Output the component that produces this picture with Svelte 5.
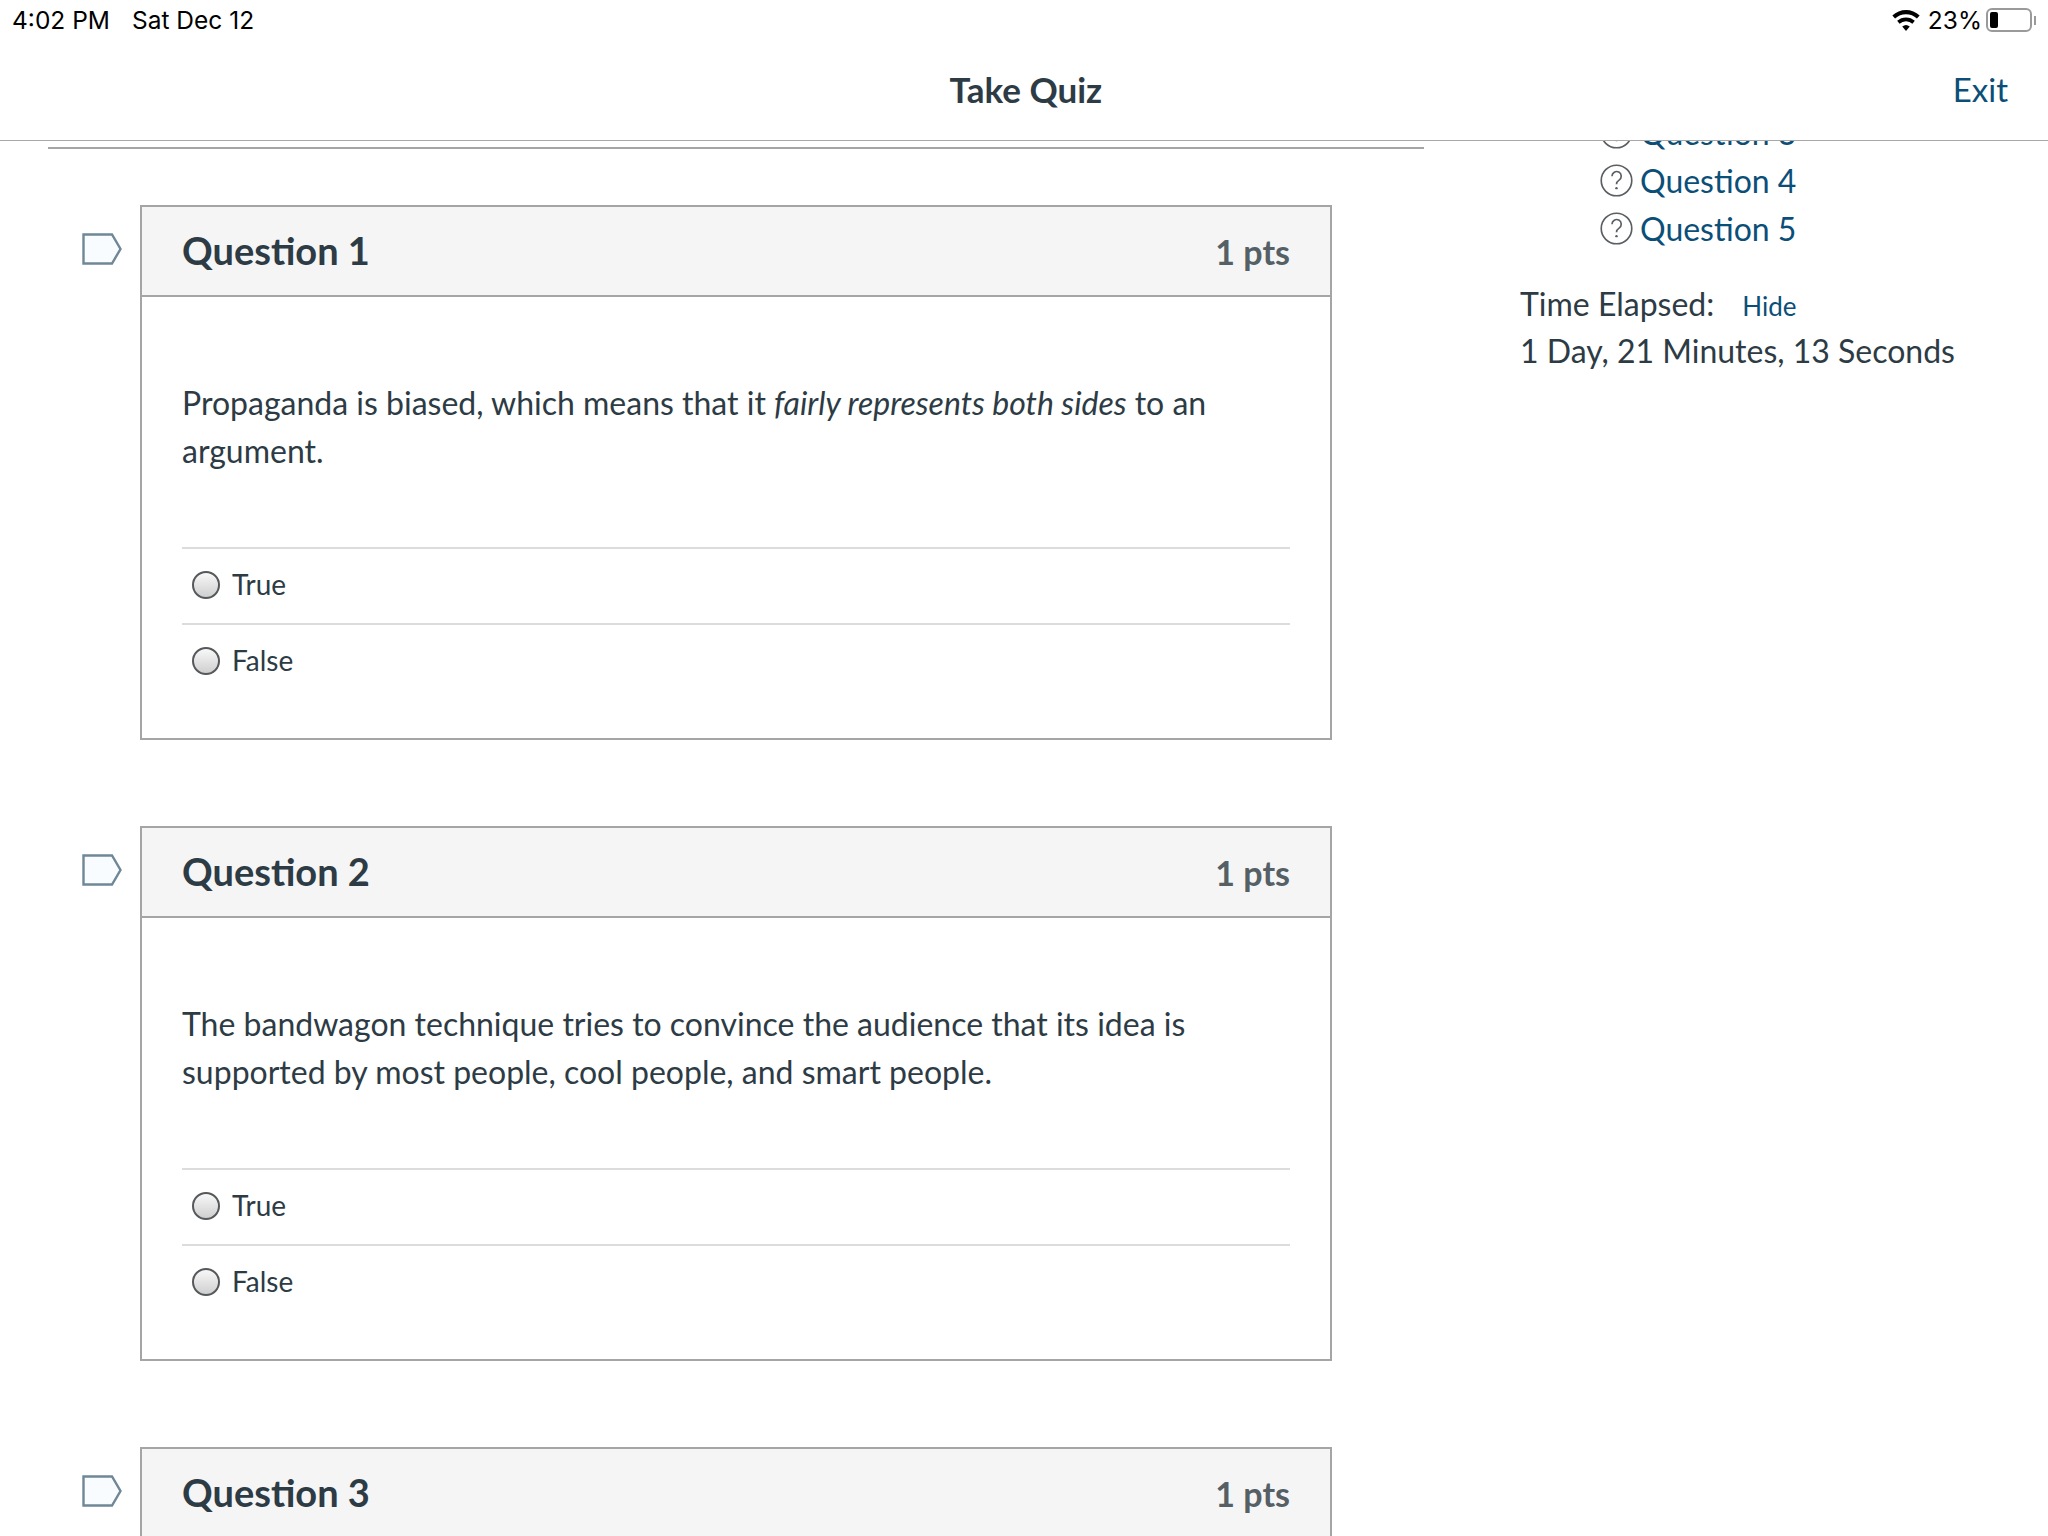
<script>
	const questions = [
		{
			n: 1,
			parts: [
				{ t: 'Propaganda is biased, which means that it ' },
				{ t: 'fairly represents both sides', em: true },
				{ t: ' to an argument.' }
			]
		},
		{
			n: 2,
			parts: [
				{ t: 'The bandwagon technique tries to convince the audience that its idea is supported by most people, cool people, and smart people.' }
			]
		},
		{ n: 3, parts: [{ t: 'Loaded language uses words that carry strong positive or negative feelings.' }] }
	];
	const navItems = [3, 4, 5];
</script>

<div class="page">
	<header class="top">
		<div class="status">
			<div class="clock"><span>4:02 PM</span><span>Sat Dec 12</span></div>
			<div class="device">
				<svg class="wifi" viewBox="0 0 26 20" width="28" height="21">
					<path d="M13 20l-3.6-4.2a5.4 5.4 0 0 1 7.2 0z" fill="#000" />
					<path d="M6.9 13l-2.3-2.7a12.6 12.6 0 0 1 16.8 0L19.1 13a9 9 0 0 0-12.2 0z" fill="#000" />
					<path d="M2.6 8L0 5.2a19 19 0 0 1 26 0L23.4 8a15.4 15.4 0 0 0-20.8 0z" fill="#000" />
				</svg>
				<span class="pct">23%</span>
				<div class="battery"><i></i></div>
				<div class="nub"></div>
			</div>
		</div>
		<div class="nav">
			<span class="spacer"></span>
			<h1>Take Quiz</h1>
			<a class="exit" href="#exit">Exit</a>
		</div>
	</header>

	<div class="content">
		<main class="quiz">
			<div class="rule"></div>
			{#each questions as q}
				<section class="question">
					<svg class="flag" viewBox="0 0 40 32" width="40" height="32">
						<path d="M1.5 1.5H30L38.5 16 30 30.5H1.5z" fill="#f9fcfe" stroke="#6f8797" stroke-width="2.4" />
					</svg>
					<article class="card">
						<div class="card-head">
							<h2>Question {q.n}</h2>
							<span class="pts">1 pts</span>
						</div>
						<div class="card-body">
							<p class="prompt">
								{#each q.parts as part}{#if part.em}<em>{part.t}</em>{:else}{part.t}{/if}{/each}
							</p>
							<div class="answers">
								{#each ['True', 'False'] as answer}
									<label class="answer">
										<input type="radio" name={'q' + q.n} />
										<span>{answer}</span>
									</label>
								{/each}
							</div>
						</div>
					</article>
				</section>
			{/each}
		</main>

		<aside class="side">
			<ul>
				{#each navItems as n}
					<li>
						<svg viewBox="0 0 32 32" width="33" height="33">
							<circle cx="16" cy="16" r="14.8" fill="none" stroke="#5a5f63" stroke-width="1.6" />
							<path d="M11.6 11.8a4.5 4.5 0 1 1 6.9 3.8c-1.6 1-2.5 1.8-2.5 4" fill="none" stroke="#5a5f63" stroke-width="1.6" />
							<circle cx="16" cy="23.4" r="1.2" fill="#5a5f63" />
						</svg>
						<a href={'#q' + n}>Question {n}</a>
					</li>
				{/each}
			</ul>
			<div class="elapsed">
				<span>Time Elapsed:</span>
				<a href="#hide">Hide</a>
			</div>
			<div class="time">1 Day, 21 Minutes, 13 Seconds</div>
		</aside>
	</div>
</div>

<style>
	:global(body) {
		margin: 0;
		background: #fff;
		color: #2d3b45;
		font-family: Lato, 'Open Sans', sans-serif;
	}

	.page {
		height: 1536px;
		display: flex;
		flex-direction: column;
		overflow: hidden;
	}

	.top {
		height: 140px;
		flex: none;
		border-bottom: 1px solid #a8a8a8;
		background: #fff;
		position: relative;
		z-index: 1;
	}

	.status {
		height: 40px;
		display: flex;
		justify-content: space-between;
		align-items: center;
		font-family: Inter, 'Liberation Sans', sans-serif;
		font-size: 24.5px;
		color: #000;
	}

	.clock {
		display: flex;
		gap: 22px;
		padding-left: 12px;
	}

	.device {
		display: flex;
		align-items: center;
		padding-right: 16px;
		position: relative;
	}

	.pct {
		margin-left: 8px;
		margin-right: 4px;
	}

	.battery {
		box-sizing: border-box;
		width: 46px;
		height: 24px;
		border: 2px solid #9a9a9a;
		border-radius: 6px;
		padding: 2px;
	}

	.battery i {
		display: block;
		width: 8px;
		height: 16px;
		border-radius: 2px;
		background: #000;
	}

	.nub {
		position: absolute;
		right: 12px;
		width: 2px;
		height: 9px;
		background: #9a9a9a;
	}

	.nav {
		height: 98px;
		padding: 0 40px 0 0;
		display: flex;
		align-items: center;
		justify-content: space-between;
	}

	.spacer {
		width: 58px;
		margin-left: 41px;
	}

	h1 {
		margin: 0;
		font-size: 35px;
		font-weight: 700;
	}

	.exit {
		color: #0b4f79;
		font-size: 33px;
		text-decoration: none;
	}

	.content {
		flex: 1;
		display: flex;
		min-height: 0;
		overflow: hidden;
	}

	.quiz {
		width: 1376px;
		flex: none;
		margin-left: 48px;
		padding-top: 6px;
	}

	.rule {
		height: 2px;
		background: #a5a5a5;
		margin-bottom: 56px;
	}

	.question {
		display: flex;
		align-items: flex-start;
		gap: 18px;
		padding-left: 34px;
		margin-bottom: 86px;
	}

	.flag {
		flex: none;
		margin-top: 28px;
	}

	.card {
		width: 1192px;
		box-sizing: border-box;
		border: 2px solid #a5a5a5;
	}

	.card-head {
		height: 88px;
		padding: 0 40px;
		display: flex;
		align-items: center;
		justify-content: space-between;
		background: #f5f5f5;
		border-bottom: 2px solid #a5a5a5;
	}

	h2 {
		margin: 0;
		font-size: 38px;
		font-weight: 700;
		position: relative;
		top: -1px;
	}

	.pts {
		font-size: 34px;
		font-weight: 700;
		color: #555f66;
	}

	.card-body {
		padding: 82px 40px 39px;
	}

	.prompt {
		margin: 0 0 72px;
		font-size: 32px;
		line-height: 48px;
	}

	.answer {
		height: 71px;
		padding-bottom: 3px;
		display: flex;
		align-items: center;
		gap: 12px;
		padding-left: 10px;
		border-top: 2px solid #dcdcdc;
		font-size: 28px;
	}

	.answer span {
		margin-bottom: 2px;
	}

	.answer input {
		appearance: none;
		width: 28px;
		height: 28px;
		margin: 0;
		border: 2px solid #55595c;
		border-radius: 50%;
		background: linear-gradient(#f8f8f8, #cfcfcf);
	}

	.side {
		flex: 1;
		padding-left: 96px;
	}

	.side ul {
		list-style: none;
		margin: -33px 0 0;
		padding: 0 0 0 80px;
	}

	.side li {
		height: 48px;
		display: flex;
		align-items: center;
		gap: 7px;
		font-size: 32px;
	}

	.side a {
		color: #0b4f79;
		text-decoration: none;
	}

	.elapsed {
		margin-top: 28px;
		height: 47px;
		display: flex;
		align-items: baseline;
		gap: 28px;
		font-size: 32px;
		line-height: 48px;
	}

	.elapsed a {
		font-size: 26px;
	}

	.time {
		font-size: 32px;
		line-height: 48px;
	}
</style>
